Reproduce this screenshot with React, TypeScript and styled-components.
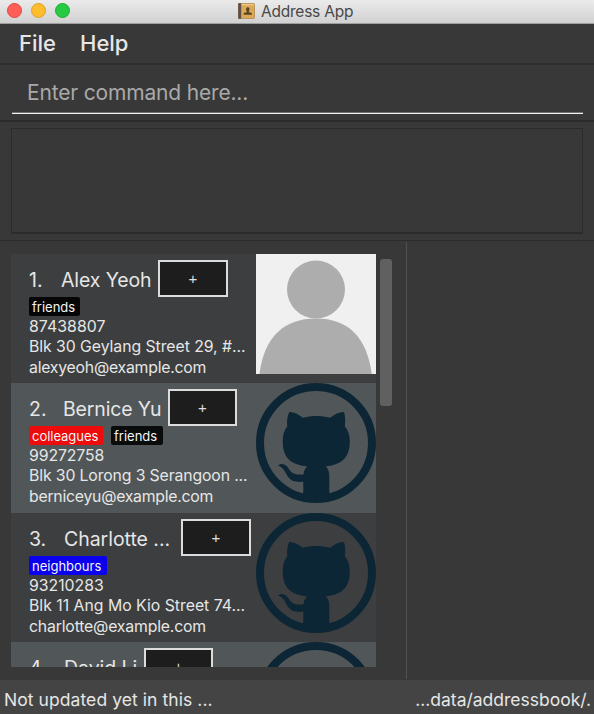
import React from "react";
import styled, { createGlobalStyle } from "styled-components";

const GlobalStyle = createGlobalStyle`
  * { box-sizing: border-box; }
  html, body { margin: 0; padding: 0; background: #383838; overflow: hidden; }
`;

const Window = styled.div`
  width: 594px;
  height: 714px;
  display: flex;
  flex-direction: column;
  overflow: hidden;
  background: #383838;
  color: #e6e6e6;
  font-family: Inter, "Liberation Sans", sans-serif;
  white-space: pre;
`;

const TitleBar = styled.header`
  flex: none;
  height: 24px;
  display: grid;
  grid-template-columns: 238px 1fr;
  background: linear-gradient(#ebebeb, #d1d1d1);
  border-bottom: 1px solid #9f9f9f;
`;

const Lights = styled.div`
  display: flex;
  gap: 9px;
  padding: 3px 0 0 7px;
`;

const Light = styled.span<{ $fill: string; $rim: string }>`
  width: 15px;
  height: 15px;
  border-radius: 50%;
  background: ${(p) => p.$fill};
  border: 1px solid ${(p) => p.$rim};
`;

const Title = styled.div`
  display: flex;
  gap: 6px;
  padding-top: 3px;
`;

const Text = styled.span<{ $size: number; $line: number; $track?: number; $weight?: number }>`
  display: block;
  font-size: ${(p) => p.$size}px;
  line-height: ${(p) => p.$line}px;
  letter-spacing: ${(p) => p.$track ?? 0}px;
  font-weight: ${(p) => p.$weight ?? 400};
`;

const TitleText = styled(Text)`
  color: #484848;
`;

const MenuBar = styled.nav`
  flex: none;
  height: 41px;
  display: grid;
  grid-template-columns: 61px auto;
  padding: 0 0 0 19px;
  border-bottom: 2px solid #2f2f2f;
`;

const CommandArea = styled.section`
  flex: none;
  height: 57px;
  padding: 0 11px 8px 12px;
  border-bottom: 2px solid #2b2b2b;
`;

const CommandField = styled.div`
  height: 49px;
  padding: 14px 0 0 15px;
  border-bottom: 1px solid #f2f2f2;
  box-shadow: inset 0 -1px 0 #727272;
  color: #a9a9a9;
`;

const ResultArea = styled.section`
  flex: none;
  height: 119px;
  padding: 6px 11px 6px;
  border-bottom: 1px solid #2b2b2b;
`;

const ResultBox = styled.div`
  height: 106px;
  border: 1px solid #2b2b2b;
  border-bottom-width: 2px;
`;

const Main = styled.main`
  flex: none;
  height: 439px;
  display: grid;
  grid-template-columns: 406px 1fr;
  padding: 1px 0;
`;

const ListPane = styled.section`
  display: flex;
  gap: 4px;
  padding: 12px 0 0 11px;
`;

const BrowserPane = styled.section`
  border-left: 1px solid #505050;
`;

const List = styled.div`
  width: 365px;
  height: 413px;
  overflow: hidden;
`;

const Thumb = styled.div`
  width: 12px;
  height: 147px;
  margin-top: 5px;
  border-radius: 3px;
  background: #606060;
`;

const Card = styled.article<{ $alt: boolean; $height: number }>`
  height: ${(p) => p.$height}px;
  display: grid;
  grid-template-columns: 227px 120px;
  padding-left: 18px;
  background: ${(p) => (p.$alt ? "#515658" : "#3c3e3f")};
`;

const Heading = styled.div`
  height: 43px;
  display: flex;
  padding-top: 6px;
`;

const Index = styled(Text)<{ $width: number }>`
  flex: none;
  width: ${(p) => p.$width}px;
`;

const Name = styled(Text)<{ $width: number }>`
  flex: none;
  width: ${(p) => p.$width}px;
`;

const AddButton = styled.button<{ $width: number }>`
  flex: none;
  width: ${(p) => p.$width}px;
  height: 37px;
  padding: 1px 0 0;
  display: grid;
  place-items: center;
  background: #1d1d1d;
  border: 2px solid #dcdcdc;
  color: #e0e0e0;
`;

const Tags = styled.div`
  height: 20px;
  display: flex;
  gap: 8px;
`;

const Tag = styled.span<{ $color: string; $width: number }>`
  width: ${(p) => p.$width}px;
  height: 19px;
  padding-left: 3px;
  border-radius: 2px;
  background: ${(p) => p.$color};
  color: #f4f4f4;
`;

const StatusBar = styled.footer`
  flex: none;
  height: 34px;
  display: flex;
  justify-content: space-between;
  padding: 6px 3px 0 4px;
  background: #444444;
`;

function BookIcon() {
  return (
    <svg width="17" height="16" viewBox="0 0 17 16">
      <rect x="0.5" y="0.5" width="16" height="15" rx="0.8" fill="#dba956" stroke="#b08a50" strokeWidth="0.8" />
      <rect x="3.5" y="1" width="12.3" height="1.4" fill="#efc77d" />
      <rect x="0.2" y="0.2" width="3" height="15.6" fill="#5d504b" />
      <path d="M5.7 11.8V10l3-.8V8.1C7.7 7 7.8 4.2 9.8 4.2s2.1 2.8 1.1 3.9v1.1l3 .8v1.8z" fill="#5b4425" />
    </svg>
  );
}

function Silhouette() {
  return (
    <svg width="120" height="120" viewBox="0 0 120 120">
      <rect width="120" height="120" fill="#f0f0f0" />
      <circle cx="60" cy="35.5" r="29" fill="#adadad" />
      <path d="M3.5 120C8 83 28 64.5 60 64.5S111 83 115.7 120z" fill="#adadad" />
    </svg>
  );
}

function Octocat() {
  return (
    <svg width="120" height="120" viewBox="0 0 120 120" fill="#0d2636">
      <circle cx="60" cy="60" r="56" fill="none" stroke="#0d2636" strokeWidth="8" />
      <path d="M33.2 29C37 28.6 42 31 47 34.8C55 32.5 65 32.5 74 34.8C79 31 84 28.6 88 29C89.6 34 89.4 39 88.8 43.2C92 47 93.8 52 93.8 58C93.8 75 86 81.5 69.8 83.4C72.5 86 73.3 89 73.3 93V109.5Q74 111.5 77 109.5L77 115H43V109.5Q46.5 111.5 47.3 109.5V98.8C39 99.3 35 98 31.8 93.5C28.5 87.5 27 84.5 22 82.5C24 80 29 80.5 31.5 84C35 89 36.5 92.5 47.5 91.4C47.7 88 49 85.5 51 83.4C34.5 81.5 26.7 75 26.7 58C26.7 52 28.3 47 31.3 43.2C30.7 39 31 34 33.2 29Z" />
    </svg>
  );
}

type TagData = { label: string; color: string; width: number; track: number };
type Line = { text: string; track: number };
type Person = {
  index: string;
  indexWidth: number;
  name: string;
  nameWidth: number;
  nameTrack: number;
  buttonWidth: number;
  height: number;
  tags: TagData[];
  lines: Line[];
};

const people: Person[] = [
  {
    index: "1.", indexWidth: 32, name: "Alex Yeoh", nameWidth: 97, nameTrack: -0.12, buttonWidth: 70, height: 129,
    tags: [{ label: "friends", color: "#060606", width: 51, track: 0 }],
    lines: [
      { text: "87438807", track: 0.07 },
      { text: "Blk 30 Geylang Street 29, #...", track: -0.05 },
      { text: "alexyeoh@example.com", track: -0.23 },
    ],
  },
  {
    index: "2.", indexWidth: 34, name: "Bernice Yu", nameWidth: 105, nameTrack: -0.15, buttonWidth: 69, height: 130,
    tags: [
      { label: "colleagues", color: "#ee0b0b", width: 74, track: -0.03 },
      { label: "friends", color: "#0a0c0c", width: 52, track: 0 },
    ],
    lines: [
      { text: "99272758", track: -0.1 },
      { text: "Blk 30 Lorong 3 Serangoon ...", track: -0.13 },
      { text: "berniceyu@example.com", track: -0.25 },
    ],
  },
  {
    index: "3.", indexWidth: 35, name: "Charlotte ...", nameWidth: 117, nameTrack: -0.04, buttonWidth: 70, height: 129,
    tags: [{ label: "neighbours", color: "#0b00ee", width: 78, track: 0 }],
    lines: [
      { text: "93210283", track: 0 },
      { text: "Blk 11 Ang Mo Kio Street 74...", track: 0 },
      { text: "charlotte@example.com", track: -0.18 },
    ],
  },
  {
    index: "4.", indexWidth: 35, name: "David Li", nameWidth: 80, nameTrack: -0.05, buttonWidth: 69, height: 129,
    tags: [], lines: [],
  },
];

function PersonCard({ person, alt, first }: { person: Person; alt: boolean; first: boolean }) {
  return (
    <Card $alt={alt} $height={person.height}>
      <div>
        <Heading>
          <Index $size={19.5} $line={41} $width={person.indexWidth}>{person.index}</Index>
          <Name $size={19.5} $line={41} $track={person.nameTrack} $width={person.nameWidth}>{person.name}</Name>
          <AddButton $width={person.buttonWidth}>
            <Text $size={15} $line={30}>+</Text>
          </AddButton>
        </Heading>
        <Tags>
          {person.tags.map((t) => (
            <Tag key={t.label} $color={t.color} $width={t.width}>
              <Text $size={13} $line={20} $track={t.track}>{t.label}</Text>
            </Tag>
          ))}
        </Tags>
        {person.lines.map((l) => (
          <Text key={l.text} $size={15.8} $line={20.4} $track={l.track}>{l.text}</Text>
        ))}
      </div>
      {first ? <Silhouette /> : <Octocat />}
    </Card>
  );
}

export default function App() {
  return (
    <>
      <GlobalStyle />
      <Window>
        <TitleBar>
          <Lights>
            <Light $fill="#ff5f57" $rim="#e2463f" />
            <Light $fill="#ffbd2e" $rim="#e0a028" />
            <Light $fill="#28ca42" $rim="#1fae34" />
          </Lights>
          <Title>
            <BookIcon />
            <TitleText $size={15.5} $line={18} $track={-0.23}>Address App</TitleText>
          </Title>
        </TitleBar>
        <MenuBar>
          <Text $size={22} $line={39} $weight={500}>File</Text>
          <Text $size={22} $line={39} $weight={500}>Help</Text>
        </MenuBar>
        <CommandArea>
          <CommandField>
            <Text $size={21} $line={28} $track={-0.17}>Enter command here...</Text>
          </CommandField>
        </CommandArea>
        <ResultArea>
          <ResultBox />
        </ResultArea>
        <Main>
          <ListPane>
            <List>
              {people.map((p, i) => (
                <PersonCard key={p.name} person={p} alt={i % 2 === 1} first={i === 0} />
              ))}
            </List>
            <Thumb />
          </ListPane>
          <BrowserPane />
        </Main>
        <StatusBar>
          <Text $size={17.5} $line={27} $track={0.07}>Not updated yet in this ...</Text>
          <Text $size={17.5} $line={27}>...data/addressbook/.</Text>
        </StatusBar>
      </Window>
    </>
  );
}
